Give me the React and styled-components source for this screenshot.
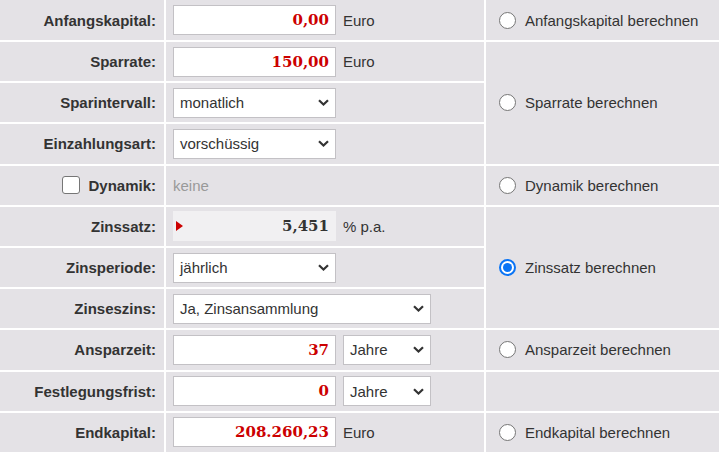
import React from "react";
import styled, { createGlobalStyle } from "styled-components";

const GlobalStyle = createGlobalStyle`
  html, body { margin: 0; padding: 0; background: #ffffff; }
  body { font-family: "Liberation Sans", Arial, sans-serif; font-size: 15px; color: #333; }
`;

const Form = styled.div`
  display: grid;
  grid-template-columns: 164px 318px 233px;
  grid-template-rows: 40px repeat(10, 39.2px);
  gap: 2px;
  width: 719px;
  background: #ffffff;
`;

const Cell = styled.div`
  background: #e4e2e6;
  display: flex;
  align-items: center;
  min-width: 0;
`;

const LabelCell = styled(Cell)`
  justify-content: flex-end;
  padding-right: 8px;
  font-weight: bold;
  font-size: 15px;
  color: #333;
  gap: 8px;
`;

const FieldCell = styled(Cell)`
  padding-left: 7px;
  gap: 7px;
`;

const OptionCell = styled(Cell)`
  padding-left: 13px;
  gap: 9px;
  grid-row: span ${(p) => p.$span || 1};
  color: #333;
`;

const NumberBox = styled.div`
  box-sizing: border-box;
  width: ${(p) => p.$w || 163}px;
  height: 30px;
  background: #fff;
  border: 1px solid #c3c1c5;
  display: flex;
  align-items: center;
  justify-content: flex-end;
  padding-right: 6px;
  font-family: "DejaVu Serif", Georgia, serif;
  font-weight: bold;
  font-size: 15px;
  color: #cc0000;
`;

const ResultBox = styled.div`
  box-sizing: border-box;
  width: 163px;
  height: 30px;
  background: #f1f0f2;
  display: flex;
  align-items: center;
  justify-content: space-between;
  padding: 0 7px 0 3px;
  font-family: "DejaVu Serif", Georgia, serif;
  font-weight: bold;
  font-size: 15px;
  color: #333;
`;

const Marker = styled.span`
  width: 0;
  height: 0;
  border-top: 5.5px solid transparent;
  border-bottom: 5.5px solid transparent;
  border-left: 7px solid #cc0000;
`;

const SelectBox = styled.div`
  box-sizing: border-box;
  width: ${(p) => p.$w}px;
  height: 30px;
  background: #fff;
  border: 1px solid #c3c1c5;
  display: flex;
  align-items: center;
  justify-content: space-between;
  padding: 0 6px 0 6px;
  font-size: 15px;
  color: #333;
`;

const Unit = styled.span`
  font-size: 15px;
  color: #333;
`;

const Muted = styled.span`
  color: #999;
  font-size: 15px;
`;

const Radio = styled.span`
  box-sizing: border-box;
  width: 17px;
  height: 17px;
  border-radius: 50%;
  background: #fff;
  border: ${(p) => (p.$checked ? "2px solid #0a74f5" : "1px solid #767676")};
  display: flex;
  align-items: center;
  justify-content: center;
  flex: none;
  &::after {
    content: "";
    display: ${(p) => (p.$checked ? "block" : "none")};
    width: 9px;
    height: 9px;
    border-radius: 50%;
    background: #0a74f5;
  }
`;

const Checkbox = styled.span`
  box-sizing: border-box;
  width: 18px;
  height: 18px;
  border-radius: 3px;
  border: 1px solid #767676;
  background: #fff;
  flex: none;
`;

const Chevron = () => (
  <svg width="11" height="7" viewBox="0 0 11 7" aria-hidden="true">
    <path d="M1 1.2l4.5 4.3L10 1.2" fill="none" stroke="#333" strokeWidth="2.2" />
  </svg>
);

const Select = ({ w, children }) => (
  <SelectBox $w={w}>
    <span>{children}</span>
    <Chevron />
  </SelectBox>
);

const Option = ({ span, checked, children }) => (
  <OptionCell $span={span}>
    <Radio $checked={checked} />
    <span>{children}</span>
  </OptionCell>
);

export default function App() {
  return (
    <>
      <GlobalStyle />
      <Form>
        <LabelCell>Anfangskapital:</LabelCell>
        <FieldCell>
          <NumberBox>0,00</NumberBox>
          <Unit>Euro</Unit>
        </FieldCell>
        <Option>Anfangskapital berechnen</Option>

        <LabelCell>Sparrate:</LabelCell>
        <FieldCell>
          <NumberBox>150,00</NumberBox>
          <Unit>Euro</Unit>
        </FieldCell>
        <Option span={3}>Sparrate berechnen</Option>

        <LabelCell>Sparintervall:</LabelCell>
        <FieldCell>
          <Select w={163}>monatlich</Select>
        </FieldCell>

        <LabelCell>Einzahlungsart:</LabelCell>
        <FieldCell>
          <Select w={163}>vorschüssig</Select>
        </FieldCell>

        <LabelCell>
          <Checkbox />
          <span>Dynamik:</span>
        </LabelCell>
        <FieldCell>
          <Muted>keine</Muted>
        </FieldCell>
        <Option>Dynamik berechnen</Option>

        <LabelCell>Zinssatz:</LabelCell>
        <FieldCell>
          <ResultBox>
            <Marker />
            <span>5,451</span>
          </ResultBox>
          <Unit>% p.a.</Unit>
        </FieldCell>
        <Option span={3} checked>
          Zinssatz berechnen
        </Option>

        <LabelCell>Zinsperiode:</LabelCell>
        <FieldCell>
          <Select w={163}>jährlich</Select>
        </FieldCell>

        <LabelCell>Zinseszins:</LabelCell>
        <FieldCell>
          <Select w={258}>Ja, Zinsansammlung</Select>
        </FieldCell>

        <LabelCell>Ansparzeit:</LabelCell>
        <FieldCell>
          <NumberBox>37</NumberBox>
          <Select w={88}>Jahre</Select>
        </FieldCell>
        <Option>Ansparzeit berechnen</Option>

        <LabelCell>Festlegungsfrist:</LabelCell>
        <FieldCell>
          <NumberBox>0</NumberBox>
          <Select w={88}>Jahre</Select>
        </FieldCell>
        <OptionCell />

        <LabelCell>Endkapital:</LabelCell>
        <FieldCell>
          <NumberBox>208.260,23</NumberBox>
          <Unit>Euro</Unit>
        </FieldCell>
        <Option>Endkapital berechnen</Option>
      </Form>
    </>
  );
}
